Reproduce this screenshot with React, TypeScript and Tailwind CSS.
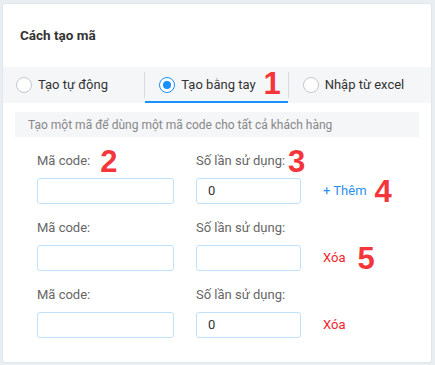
import { ReactNode } from 'react'

function Mark({ n, className }: { n: string; className: string }) {
  return (
    <span
      className={`absolute top-1/2 -translate-y-1/2 text-[31px] font-bold leading-none text-[#f4363b] ${className}`}
      style={{ fontFamily: '"Liberation Sans", Arial, sans-serif' }}
    >
      {n}
    </span>
  )
}

function Radio({ checked, label, children }: { checked?: boolean; label: string; children?: ReactNode }) {
  return (
    <div className="flex items-center gap-[6px]">
      <span
        className={`flex h-4 w-4 items-center justify-center rounded-full border bg-white ${
          checked ? 'border-[#1890ff]' : 'border-[#c3c7cf]'
        }`}
      >
        {checked && <span className="h-2 w-2 rounded-full bg-[#1890ff]" />}
      </span>
      <span className="relative text-[13px] text-[#333]">
        {label}
        {children}
      </span>
    </div>
  )
}

function CodeRow({ value, action, mark }: { value: string; action: 'add' | 'del'; mark?: 'first' | 'del' }) {
  return (
    <div className="grid grid-cols-[137px_105px_auto] gap-x-[22px] gap-y-[7px]">
      <div className="relative h-5 text-[13px] leading-5 text-[#666]">
        <span className="relative">
          Mã code:
          {mark === 'first' && <Mark n="2" className="left-[calc(100%+10px)]" />}
        </span>
      </div>
      <div className="relative h-5 text-[13px] leading-5 text-[#666]">
        <span className="relative">
          Số lần sử dụng:
          {mark === 'first' && <Mark n="3" className="left-[calc(100%+3px)]" />}
        </span>
      </div>
      <div />
      <div className="h-[26px] rounded-[3px] border border-[#bfe2fb] bg-white" />
      <div className="flex h-[26px] items-center rounded-[3px] border border-[#bfe2fb] bg-white pl-[11px] text-[13px] text-[#333]">
        {value}
      </div>
      <div className="flex items-center">
        {action === 'add' ? (
          <span className="relative text-[13px] text-[#2b8ff0]">
            + Thêm
            <Mark n="4" className="left-[calc(100%+8px)]" />
          </span>
        ) : (
          <span className="relative text-[13px] text-[#f5222d]">
            Xóa
            {mark === 'del' && <Mark n="5" className="left-[calc(100%+12px)]" />}
          </span>
        )}
      </div>
    </div>
  )
}

export default function App() {
  return (
    <div
      className="min-h-[365px] w-[435px] bg-[#e9eef3] pl-[2px] pt-[3px]"
      style={{ fontFamily: 'Roboto, "Noto Sans", sans-serif' }}
    >
      <div className="w-[430px] rounded-[3px] border border-[#e1e6ec] bg-white pb-[24px]">
        {/* Header */}
        <div className="flex h-[63px] items-center pl-[17px]">
          <h2 className="text-[13.5px] font-bold text-[#333]">Cách tạo mã</h2>
        </div>

        {/* Tabs */}
        <div className="flex h-[36px] items-stretch bg-[#f5f6f8]">
          <div className="flex flex-1 items-center pl-[13px]">
            <Radio label="Tạo tự động" />
          </div>
          <div className="w-px self-center h-[26px] bg-[#d8dbe0]" />
          <div className="flex flex-1 items-center border-b-2 border-[#1890ff] pl-[14px] pt-[2px]">
            <Radio checked label="Tạo bằng tay">
              <Mark n="1" className="left-[calc(100%+8px)] mt-[-2px]" />
            </Radio>
          </div>
          <div className="w-px self-center h-[26px] bg-[#d8dbe0]" />
          <div className="flex flex-1 items-center pl-[14px]">
            <Radio label="Nhập từ excel" />
          </div>
        </div>

        {/* Info */}
        <div className="mx-[12px] mt-[9px] flex h-[25px] items-center bg-[#f5f6f8] pl-[13px] text-[12px] text-[#888]">
          Tạo một mã để dùng một mã code cho tất cả khách hàng
        </div>

        {/* Rows */}
        <div className="mt-[14px] flex flex-col gap-[14px] pl-[34px]">
          <CodeRow value="0" action="add" mark="first" />
          <CodeRow value="" action="del" mark="del" />
          <CodeRow value="0" action="del" />
        </div>
      </div>
    </div>
  )
}
